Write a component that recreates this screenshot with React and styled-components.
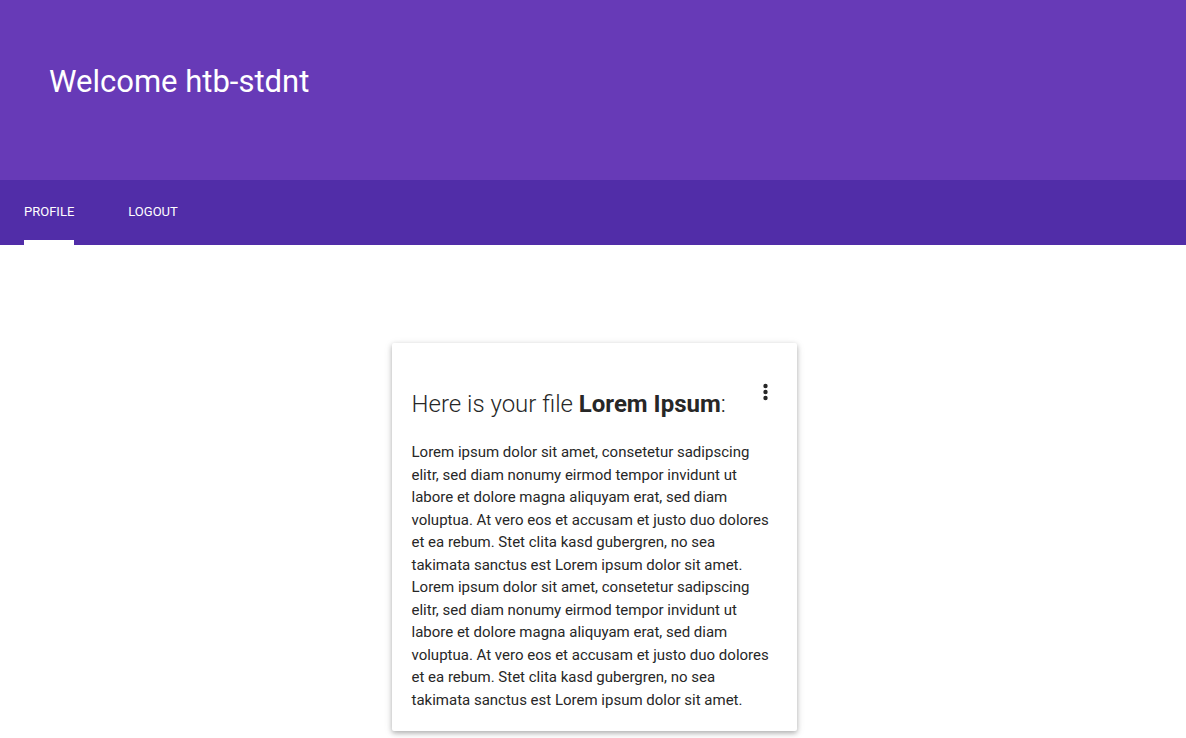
import React from "react";
import styled, { createGlobalStyle } from "styled-components";

const GlobalStyle = createGlobalStyle`
  *, *::before, *::after { box-sizing: border-box; }
  body {
    margin: 0;
    background: #fff;
    color: #272727;
    font-family: Roboto, "Liberation Sans", sans-serif;
    font-size: 15px;
    line-height: 1.5;
  }
`;

const Header = styled.header`
  height: 180px;
  padding: 58px 49px 0;
  background: #673ab7;
  color: #fff;
`;

const Title = styled.h1`
  margin: 0;
  font-size: 31px;
  line-height: 48px;
  font-weight: 400;
`;

const TabBar = styled.nav`
  display: flex;
  gap: 54px;
  height: 65px;
  padding: 0 24px;
  background: #512da8;
`;

const Tab = styled.a`
  display: flex;
  align-items: center;
  padding-top: 4px;
  border-bottom: 5px solid ${(p) => (p.$active ? "#fff" : "transparent")};
  color: #fff;
  font-size: 13px;
  line-height: 20px;
  text-decoration: none;
  text-transform: uppercase;
`;

const Main = styled.main`
  display: flex;
  justify-content: center;
  padding: 98px 0 7px 2px;
`;

const Card = styled.article`
  width: 405px;
  max-width: 100%;
  padding: 37px 20px 20px;
  border-radius: 2px;
  background: #fff;
  box-shadow: 0 2px 5px 0 rgba(0, 0, 0, 0.26), 0 2px 10px 0 rgba(0, 0, 0, 0.1);
`;

const CardHeader = styled.div`
  display: flex;
  justify-content: space-between;
  align-items: flex-start;
`;

const CardTitle = styled.h2`
  margin: 7px 0 0;
  font-size: 24px;
  line-height: 34px;
  font-weight: 300;
  white-space: nowrap;

  strong { font-weight: 700; }
`;

const MenuButton = styled.button`
  display: flex;
  padding: 0;
  border: 0;
  background: none;
  color: inherit;
  cursor: pointer;
`;

const CardText = styled.p`
  margin: 20px 0 0;
`;

const lorem =
  "Lorem ipsum dolor sit amet, consetetur sadipscing elitr, sed diam nonumy eirmod tempor invidunt ut labore et dolore magna aliquyam erat, sed diam voluptua. At vero eos et accusam et justo duo dolores et ea rebum. Stet clita kasd gubergren, no sea takimata sanctus est Lorem ipsum dolor sit amet.";

export default function App() {
  return (
    <>
      <GlobalStyle />
      <Header>
        <Title>Welcome htb-stdnt</Title>
      </Header>
      <TabBar>
        <Tab href="#profile" $active aria-current="page">Profile</Tab>
        <Tab href="#logout">Logout</Tab>
      </TabBar>
      <Main>
        <Card>
          <CardHeader>
            <CardTitle>
              Here is your file <strong>Lorem Ipsum</strong>:
            </CardTitle>
            <MenuButton type="button" aria-label="More options">
              <svg width="24" height="24" viewBox="0 0 24 24" fill="currentColor" aria-hidden="true">
                <circle cx="12.5" cy="6" r="2.2" />
                <circle cx="12.5" cy="12" r="2.2" />
                <circle cx="12.5" cy="18" r="2.2" />
              </svg>
            </MenuButton>
          </CardHeader>
          <CardText>
            {lorem} {lorem}
          </CardText>
        </Card>
      </Main>
    </>
  );
}
